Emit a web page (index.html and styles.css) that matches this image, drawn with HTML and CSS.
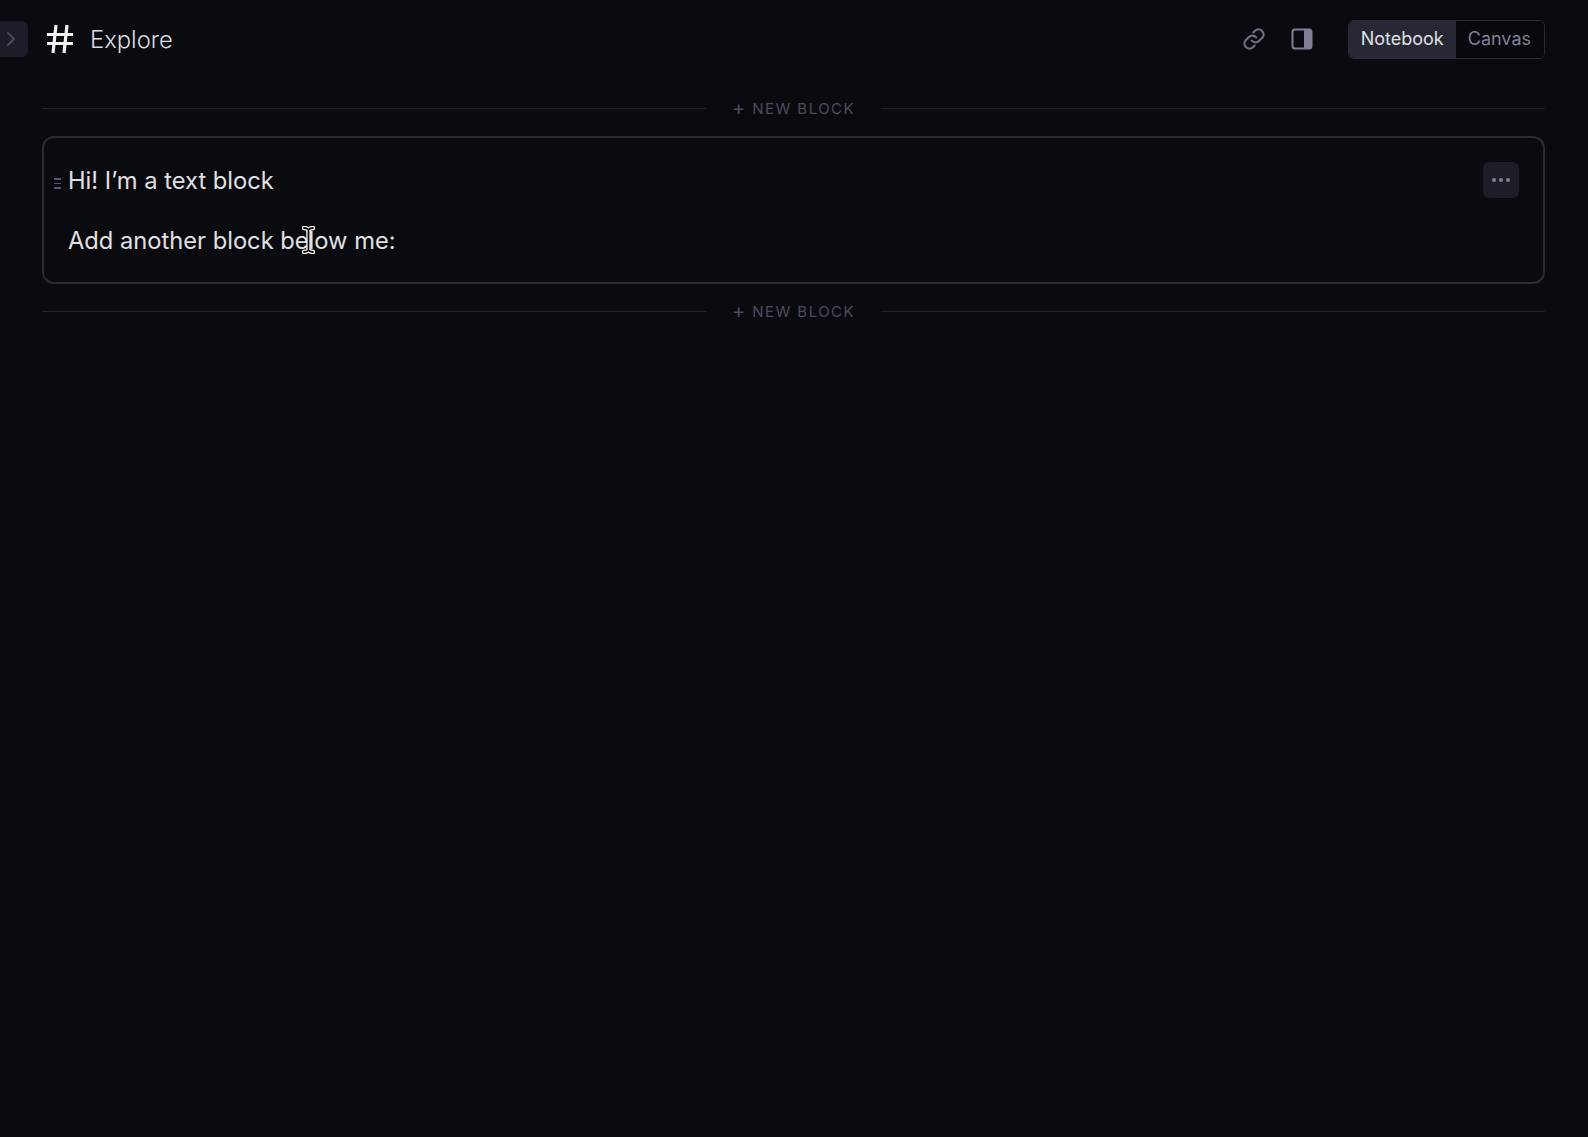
FILE: index.html
```html
<!DOCTYPE html>
<html lang="en">
<head>
<meta charset="utf-8">
<title>Explore</title>
<link rel="stylesheet" href="styles.css">
</head>
<body>
<div class="page">
  <header class="topbar">
    <div class="title-group">
      <button class="side-toggle" aria-label="Expand sidebar">
        <svg width="10" height="16" viewBox="0 0 10 16" fill="none"><path d="M2 2l6 6-6 6" stroke="#4a4b62" stroke-width="1.8" stroke-linecap="round" stroke-linejoin="round"/></svg>
      </button>
      <svg class="hash" width="30" height="32" viewBox="0 0 30 32" fill="none"><path d="M11 2L8 30M22 2l-3 28M2 11.500h26M2 20.500h26" stroke="#f2f2f4" stroke-width="3.200"/></svg>
      <span class="title">Explore</span>
    </div>
    <div class="actions">
      <svg class="act-icon" width="26" height="26" viewBox="0 0 24 24" fill="none"><path d="M10 13.500a4.500 4.500 0 0 0 6.600.4l3-3a4.600 4.600 0 0 0-6.500-6.500l-1.700 1.700M14 10.500a4.500 4.500 0 0 0-6.600-.4l-3 3a4.600 4.600 0 0 0 6.500 6.500l1.700-1.700" stroke="#6e6f85" stroke-width="2" stroke-linecap="round" stroke-linejoin="round"/></svg>
      <svg class="act-icon" width="22" height="22" viewBox="0 0 22 22" fill="none"><rect x="1.500" y="1.500" width="19" height="19" rx="2.500" stroke="#7f8098" stroke-width="2"/><path d="M13 1.500h5A2.500 2.500 0 0 1 20.500 4v14a2.500 2.500 0 0 1-2.500 2.500h-5z" fill="#7f8098"/></svg>
      <div class="switch">
        <span class="seg seg-on">Notebook</span>
        <span class="seg">Canvas</span>
      </div>
    </div>
  </header>
  <main class="content">
    <div class="divider"><span class="rule"></span><span class="new-block"><span class="plus">+</span>NEW BLOCK</span><span class="rule"></span></div>
    <section class="block">
      <span class="grip"><i></i><i></i><i></i></span>
      <div class="block-text">
        <p>Hi! I’m a text block</p>
        <p>Add another block below me:</p>
      </div>
      <button class="more" aria-label="More"><i></i><i></i><i></i></button>
      <svg class="ibeam" width="13" height="28" viewBox="0 0 13 28" fill="none"><path d="M2 2c2 0 3.500.5 4.500 1.800C7.500 2.500 9 2 11 2M6.500 3.800v20.400M2 26c2 0 3.500-.5 4.500-1.800C7.500 25.500 9 26 11 26" stroke="#fff" stroke-width="4.400" stroke-linecap="round"/><path d="M2 2c2 0 3.500.5 4.500 1.800C7.500 2.500 9 2 11 2M6.500 3.800v20.400M2 26c2 0 3.500-.5 4.500-1.800C7.500 25.500 9 26 11 26" stroke="#0a0a0c" stroke-width="1.800" stroke-linecap="round"/></svg>
    </section>
    <div class="divider divider-after"><span class="rule"></span><span class="new-block"><span class="plus">+</span>NEW BLOCK</span><span class="rule"></span></div>
  </main>
</div>
</body>
</html>
```
FILE: styles.css
```css
* { box-sizing: border-box; }
html, body { margin: 0; height: 100%; background: #0a0b0f; }
body { font-family: Inter, "Liberation Sans", sans-serif; color: #e8e8ec; }
.page { min-height: 1137px; background: #0a0b0f; }
.topbar { display: flex; justify-content: space-between; align-items: center; height: 80px; padding: 0 43px 2px 0; }
.title-group { display: flex; align-items: center; }
.side-toggle { display: flex; align-items: center; justify-content: flex-start; width: 28px; height: 36px; padding: 0 0 0 6px; border: 0; border-radius: 0 6px 6px 0; background: #1c1d28; }
.hash { margin-left: 17px; display: block; }
.title { margin-left: 15px; font-size: 23.8px; font-weight: 300; color: #dcdce2; }
.actions { display: flex; align-items: center; }
.act-icon { display: block; }
.act-icon + .act-icon { margin-left: 24px; }
.switch { display: flex; margin-left: 35px; height: 39px; border: 1px solid #2a2b38; border-radius: 6px; overflow: hidden; font-size: 18px; }
.seg { display: flex; align-items: center; padding: 0 13px 1px 12px; color: #7f8098; background: #08090c; }
.seg-on { padding-right: 12px; background: #262835; color: #e0e0e6; }
.content { padding: 0 43px 0 42px; }
.divider { display: flex; align-items: center; height: 56px; }
.divider-after { height: 54px; }
.rule { flex: 1; height: 1px; background: #20212a; }
.new-block { display: flex; align-items: center; padding: 0 26px; font-size: 15px; letter-spacing: 1.450px; color: #4a4b5e; white-space: nowrap; }
.plus { margin-right: 7px; font-size: 20px; line-height: 1; letter-spacing: 0; }
.block { position: relative; display: flex; height: 148px; padding: 24px 26px 0 24px; border: 2px solid #2a2b38; border-radius: 12px; }
.block-text { flex: 1; padding-top: 1px; font-size: 23.7px; line-height: 36px; color: #e0e0e4; }
.block-text p { margin: 0 0 24px; }
.grip { position: absolute; left: 10px; top: 40px; display: flex; flex-direction: column; gap: 3px; }
.grip i { display: block; width: 7px; height: 1.500px; background: #56576e; }
.more { display: flex; align-items: center; justify-content: center; gap: 3px; width: 36px; height: 36px; margin-right: -2px; padding: 0; border: 0; border-radius: 6px; background: #1c1d27; }
.more i { display: block; width: 4px; height: 4px; border-radius: 50%; background: #7f8098; }
.ibeam { position: absolute; left: 258px; top: 88px; }
```
